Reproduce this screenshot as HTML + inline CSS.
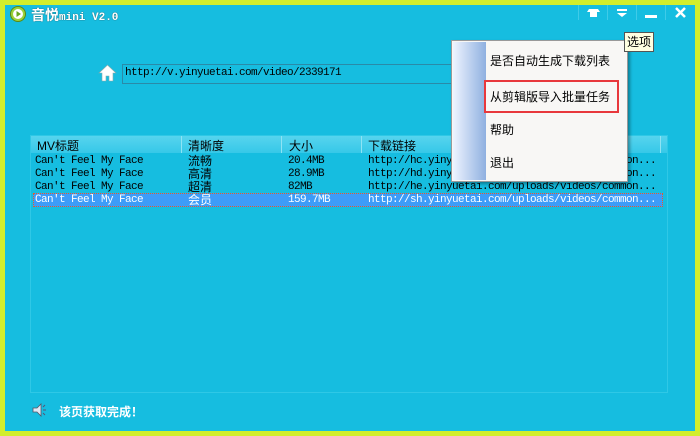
<!DOCTYPE html>
<html><head><meta charset="utf-8"><style>
*{margin:0;padding:0;box-sizing:border-box}
body{width:700px;height:436px;overflow:hidden;background:#d2ee2c;position:relative;font-family:"Liberation Sans","Noto Sans CJK SC",sans-serif}
.win{position:absolute;left:5px;top:5px;width:690px;height:426px;background:#16bde0}
.abs{position:absolute}
.mono{font-family:"Liberation Mono","Noto Sans CJK SC",monospace;font-size:11px;letter-spacing:-0.6px}
.title{left:31px;top:5px;color:#fff;font-weight:bold;font-size:14px;text-shadow:0 0 1px #333}
.btn{top:0;width:29px;height:15px;border-left:1px solid #3fcbe8;}
.panel{left:30px;top:135px;width:638px;height:258px;border:1px solid #2fc8e6}
.hdr{left:31px;top:136px;width:636px;height:17px;background:linear-gradient(#56d4ee,#36c8e8);}
.hdr span{position:absolute;top:1px;font-size:12px;color:#000}
.div{position:absolute;top:0;width:1px;height:17px;background:#8ee3f4}
.row{position:absolute;left:35px;height:13px;line-height:13px;color:#000}
.sel{left:33px;top:193px;width:630px;height:14px;background:#3d9cf8;border:1px dotted #e0602a}
.menu{left:451px;top:40px;width:177px;height:142px;background:#f8f7f5;border:1px solid #999;box-shadow:2px 2px 3px rgba(0,0,0,.35)}
.strip{left:1px;top:1px;width:33px;height:138px;background:linear-gradient(90deg,#eef4ff,#8fb0e0)}
.mi{position:absolute;left:38px;font-size:12px;color:#000}
.cn{font-size:12px;line-height:12px}
</style></head><body>
<div class="win"></div>
<svg class="abs" style="left:10px;top:6px" width="16" height="16"><circle cx="8" cy="8" r="7.5" fill="#9cd23a" stroke="#5a8a10"/><circle cx="8" cy="8" r="5" fill="#fff"/><path d="M6.5 5 L11 8 L6.5 11Z" fill="#6aa820"/></svg>
<div class="abs title">音悦<span style="font-family:'Liberation Mono',monospace;font-size:11px">mini V2.0</span></div>
<div class="abs btn" style="left:578px;top:5px"><svg width="29" height="15"><path d="M10 4h9l2 3h-3v5h-7v-5h-3z" fill="#fff"/></svg></div>
<div class="abs btn" style="left:607px;top:5px"><svg width="29" height="15"><path d="M9 4h10v2h-10zM9 8h10l-5 4z" fill="#fff"/></svg></div>
<div class="abs btn" style="left:636px;top:5px"><svg width="29" height="15"><rect x="8" y="10" width="12" height="3" fill="#fff"/></svg></div>
<div class="abs btn" style="left:665px;top:5px"><svg width="29" height="15"><path d="M10 3l9 9M19 3l-9 9" stroke="#fff" stroke-width="2.5"/></svg></div>
<svg class="abs" style="left:98px;top:64px" width="19" height="18"><path d="M9.5 1L1 9h3v8h4v-5h3v5h4V9h3z" fill="#fff" stroke="#8aa" stroke-width=".6"/></svg>
<div class="abs" style="left:122px;top:64px;width:330px;height:20px;border:1px solid #2a8aa8;"></div>
<div class="abs mono" style="left:125px;top:67px;color:#000">http://v.yinyuetai.com/video/2339171</div>
<div class="abs panel"></div>
<div class="abs hdr"><span style="left:6px">MV标题</span><div class="div" style="left:150px"></div><span style="left:157px">清晰度</span><div class="div" style="left:250px"></div><span style="left:258px">大小</span><div class="div" style="left:330px"></div><span style="left:337px">下载链接</span><div class="div" style="left:629px"></div></div>
<div class="abs sel"></div>
<div class="row mono" style="top:155px">Can't Feel My Face</div>
<div class="row mono" style="top:168px">Can't Feel My Face</div>
<div class="row mono" style="top:181px">Can't Feel My Face</div>
<div class="row mono" style="top:194px;color:#fff">Can't Feel My Face</div>
<div class="row cn" style="left:188px;top:155px">流畅</div>
<div class="row cn" style="left:188px;top:168px">高清</div>
<div class="row cn" style="left:188px;top:181px">超清</div>
<div class="row cn" style="left:188px;top:194px;color:#fff">会员</div>
<div class="row mono" style="left:288px;top:155px">20.4MB</div>
<div class="row mono" style="left:288px;top:168px">28.9MB</div>
<div class="row mono" style="left:288px;top:181px">82MB</div>
<div class="row mono" style="left:288px;top:194px;color:#fff">159.7MB</div>
<div class="row mono" style="left:368px;top:155px">http://hc.yinyuetai.com/uploads/videos/common...</div>
<div class="row mono" style="left:368px;top:168px">http://hd.yinyuetai.com/uploads/videos/common...</div>
<div class="row mono" style="left:368px;top:181px">http://he.yinyuetai.com/uploads/videos/common...</div>
<div class="row mono" style="left:368px;top:194px;color:#fff">http://sh.yinyuetai.com/uploads/videos/common...</div>
<div class="abs menu"><div class="abs strip"></div>
<div class="mi" style="top:11px">是否自动生成下载列表</div>
<div class="abs" style="left:32px;top:39px;width:135px;height:33px;border:2px solid #e8383c"></div>
<div class="mi" style="top:47px">从剪辑版导入批量任务</div>
<div class="mi" style="top:80px">帮助</div>
<div class="mi" style="top:113px">退出</div>
</div>
<div class="abs" style="left:624px;top:32px;width:30px;height:20px;background:#ffffe1;border:1px solid #555;font-size:12px;line-height:18px;text-align:center">选项</div>
<svg class="abs" style="left:32px;top:403px" width="16" height="14"><path d="M1 5h4l4-4v12l-4-4h-4z" fill="#dfe8f5" stroke="#556" stroke-width=".8"/><path d="M11 4l2-2M11 7h3M11 10l2 2" stroke="#557" /></svg>
<div class="abs" style="left:59px;top:403px;color:#fff;font-size:12px;font-weight:bold">该页获取完成！</div>
</body></html>
